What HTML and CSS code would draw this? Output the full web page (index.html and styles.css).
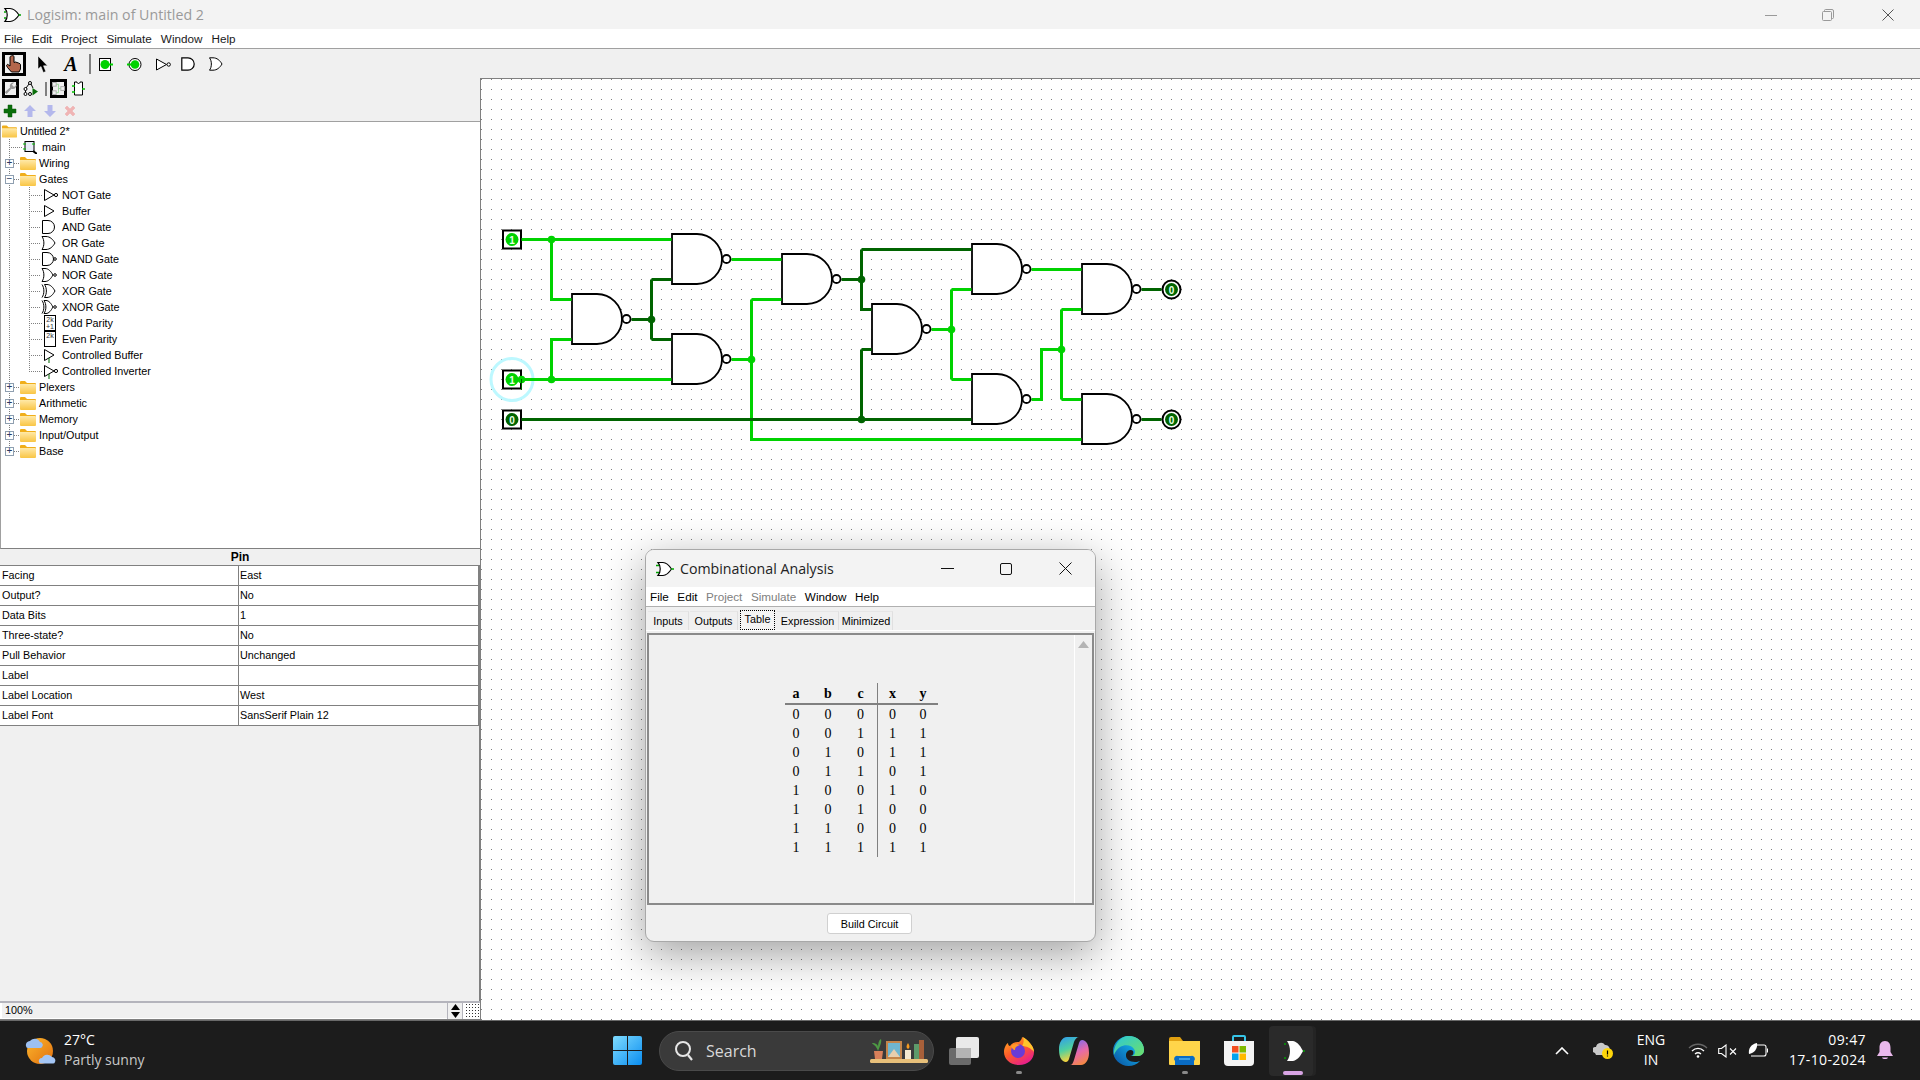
FILE: index.html
```html
<!DOCTYPE html>
<html lang="en">
<head>
<meta charset="utf-8">
<title>Logisim: main of Untitled 2</title>
<link rel="stylesheet" href="styles.css">
</head>
<body>
<svg class="defs" width="0" height="0" aria-hidden="true">
  <defs>
    <linearGradient id="fold" x1="0" y1="0" x2="0" y2="1"><stop offset="0" stop-color="#ffe9a8"/><stop offset="1" stop-color="#f9c544"/></linearGradient>
    <symbol id="folder" viewBox="0 0 16 14"><path d="M0 2a1 1 0 0 1 1-1h4l2 2h8a1 1 0 0 1 1 1v1H0z" fill="#f0ae1a"/><path d="M0 4h15a1 1 0 0 1 1 1v8a1 1 0 0 1-1 1H1a1 1 0 0 1-1-1z" fill="url(#fold)"/></symbol>
    <symbol id="i-not" viewBox="0 0 16 16"><path d="M1.5 2.5V13.5L11 8z" fill="#fff" stroke="#000"/><circle cx="13" cy="8" r="1.6" fill="#fff" stroke="#000"/></symbol>
    <symbol id="i-buf" viewBox="0 0 16 16"><path d="M1.5 2.5V13.5L11 8z" fill="#fff" stroke="#000"/></symbol>
    <symbol id="i-and" viewBox="0 0 16 16"><path d="M1.5 1.5H7A6.5 6.500 0 0 1 7 14.500H1.500z" fill="#fff" stroke="#000"/></symbol>
    <symbol id="i-or" viewBox="0 0 16 16"><path d="M1 1.500H5C9 1.500 12 4.500 14 8 12 11.500 9 14.500 5 14.500H1C3.500 11 3.500 5 1 1.500z" fill="#fff" stroke="#000"/></symbol>
    <symbol id="i-nand" viewBox="0 0 16 16"><path d="M1.500 1.500H6A6.500 6.500 0 0 1 6 14.500H1.500z" fill="#fff" stroke="#000"/><circle cx="14" cy="8" r="1.300" fill="#fff" stroke="#000"/></symbol>
    <symbol id="i-nor" viewBox="0 0 16 16"><path d="M1 1.500H4C7.500 1.500 10 4.500 12 8 10 11.500 7.500 14.500 4 14.500H1C3.500 11 3.500 5 1 1.500z" fill="#fff" stroke="#000"/><circle cx="14" cy="8" r="1.300" fill="#fff" stroke="#000"/></symbol>
    <symbol id="i-xor" viewBox="0 0 16 16"><path d="M3.500 1.500H6C9.500 1.500 12 4.500 14 8 12 11.500 9.500 14.500 6 14.500H3.500C6 11 6 5 3.500 1.500z" fill="#fff" stroke="#000"/><path d="M1 1.500C3.500 5 3.500 11 1 14.500" fill="none" stroke="#000"/></symbol>
    <symbol id="i-xnor" viewBox="0 0 16 16"><path d="M3 1.500H5C8 1.500 10 4.500 12 8 10 11.500 8 14.500 5 14.500H3C5.500 11 5.500 5 3 1.500z" fill="#fff" stroke="#000"/><path d="M1 1.500C3.500 5 3.500 11 1 14.500" fill="none" stroke="#000"/><circle cx="14" cy="8" r="1.300" fill="#fff" stroke="#000"/></symbol>
    <symbol id="i-cbuf" viewBox="0 0 16 16"><path d="M1.500 2.500V13.500L11 8z" fill="#fff" stroke="#000"/><path d="M6 11V16" stroke="#006400"/></symbol>
    <symbol id="i-cinv" viewBox="0 0 16 16"><path d="M1.500 2.500V13.500L11 8z" fill="#fff" stroke="#000"/><circle cx="13" cy="8" r="1.600" fill="#fff" stroke="#000"/><path d="M6 11V16" stroke="#006400"/></symbol>
    <g id="nand">
      <path d="M0-25H25A25 25 0 0 1 25 25H0Z" fill="#fff" stroke="#000" stroke-width="1.800"/>
      <circle cx="54.500" cy="0" r="4" fill="#fff" stroke="#000" stroke-width="1.800"/>
    </g>
  </defs>
</svg>

<div class="app">
  <header class="titlebar">
    <svg class="title-icon" width="18" height="16" viewBox="0 0 18 16"><path d="M2 1.500H7C10.500 1.500 14 5 16 8 14 11 10.500 14.500 7 14.500H2C5 11 5 5 2 1.500z" fill="#fff" stroke="#000" stroke-width="1.200"/><path d="M1 5H3M1 11H3" stroke="#00a000" stroke-width="1.500"/><path d="M15.500 8H18" stroke="#00a000" stroke-width="1.500"/></svg>
    <span class="title-text">Logisim: main of Untitled 2</span>
    <div class="win-controls">
      <svg width="12" height="12" viewBox="0 0 12 12"><path d="M0 6.500H12" stroke="#999"/></svg>
      <svg class="restore" width="12" height="12" viewBox="0 0 12 12"><path d="M2.500 2.500V1.500A1 1 0 0 1 3.500.5H10A1.500 1.500 0 0 1 11.500 2V8.500A1 1 0 0 1 10.500 9.500H9.500M1.500 2.500H8.500A1 1 0 0 1 9.500 3.500V10.500A1 1 0 0 1 8.500 11.500H1.500A1 1 0 0 1 .5 10.500V3.500A1 1 0 0 1 1.500 2.500Z" fill="none" stroke="#999"/></svg>
      <svg width="12" height="12" viewBox="0 0 12 12"><path d="M.5.500L11.500 11.500M11.500.500L.5 11.500" stroke="#555"/></svg>
    </div>
  </header>
  <nav class="menubar">
    <span>File</span><span>Edit</span><span>Project</span><span>Simulate</span><span>Window</span><span>Help</span>
  </nav>
  <div class="toolbar">
    <div class="tool-box">
      <svg width="18" height="18" viewBox="0 0 18 18"><path d="M7 .8C8 .3 9 .8 9 1.800V7.500L10.500 7 12 7.500 13.500 8 15 8.800 15.500 9.500V14L14 17H6.500L2.500 12.500 1.500 10.500 2.500 9.300 5 11V2C5 1.300 6 .9 7 .8Z" fill="#b4674c" stroke="#000"/></svg>
    </div>
    <svg width="11" height="17" viewBox="0 0 11 17"><path d="M1 0V13L4 10.500 6.300 16.500 8.800 15.500 6.500 9.800H10.500Z" fill="#000" stroke="#fff" stroke-width=".5"/></svg>
    <span class="tool-a">A</span>
    <span class="tool-sep"></span>
    <svg class="tool-pin" width="15" height="15" viewBox="0 0 15 15"><rect x=".5" y="1.500" width="11" height="12" fill="#fff" stroke="#000"/><circle cx="6" cy="7.500" r="4.500" fill="#00d200"/><path d="M10 7.500H14" stroke="#00d200" stroke-width="2"/></svg>
    <svg width="15" height="15" viewBox="0 0 15 15"><circle cx="8" cy="7.500" r="6" fill="#fff" stroke="#000"/><circle cx="8" cy="7.500" r="4.300" fill="#00d200"/><path d="M0 7.500H4" stroke="#00d200" stroke-width="2"/></svg>
    <svg width="15" height="13" viewBox="0 0 15 13"><path d="M.5 1V12L10.500 6.500Z" fill="#fff" stroke="#000"/><circle cx="12.700" cy="6.500" r="1.700" fill="#fff" stroke="#000"/></svg>
    <svg width="14" height="14" viewBox="0 0 14 14"><path d="M.8.800H7A6.200 6.200 0 0 1 7 13.200H.8Z" fill="#fff" stroke="#000" stroke-width="1.200"/></svg>
    <svg width="14" height="14" viewBox="0 0 14 14"><path d="M.5.800H4C8 .8 11 3.500 13 7 11 10.500 8 13.200 4 13.200H.5C3 10 3 4 .5.800Z" fill="#fff" stroke="#000"/></svg>
  </div>

  <div class="workspace">
    <aside class="sidebar">
      <div class="tools2">
        <div class="tool-box small">
          <svg width="13" height="13" viewBox="0 0 14 14"><path d="M13.500 3A4 4 0 0 1 8 7.200L2.800 13 .8 11 6.500 5.800A4 4 0 0 1 11 .5L8.500 3 10.800 5.300Z" fill="#999"/></svg>
        </div>
        <svg width="15" height="15" viewBox="0 0 15 15"><g fill="#fff" stroke="#000"><circle cx="7" cy="2" r="1.500"/><circle cx="2.500" cy="8" r="1.500"/><circle cx="2.500" cy="13" r="1.500"/><circle cx="7" cy="13" r="1.500"/></g><path d="M6 3L3 7M2.500 9.500V11.500M8 3L10 7" stroke="#000"/><path d="M9.500 7V14.500L15 10.500Z" fill="#0a6e0a"/></svg>
        <span class="tool-sep short"></span>
        <div class="tool-box small">
          <svg width="13" height="13" viewBox="0 0 14 14"><g fill="none" stroke="#aaa"><rect x=".5" y=".5" width="4" height="4"/><rect x=".5" y="9.500" width="4" height="4"/><rect x="9.500" y="5" width="4" height="4"/></g><path d="M4.500 2.500H7V11.500H4.500M7 7H9.500" fill="none" stroke="#9fd89f"/></svg>
        </div>
        <svg width="13" height="15" viewBox="0 0 13 15"><path d="M2.500 1H5C5 3 8 3 8 1H10.500V14H2.500Z" fill="#fff" stroke="#000"/><path d="M0 5H3M0 11H3M10 8H13" stroke="#00c000" stroke-width="1.400"/></svg>
      </div>
      <div class="tools3">
        <svg width="14" height="14" viewBox="0 0 14 14"><path d="M5 1H9V5H13V9H9V13H5V9H1V5H5Z" fill="#0a6e0a" stroke="#0a5a0a" stroke-width=".5"/></svg>
        <svg width="14" height="14" viewBox="0 0 14 14"><path d="M7 1L13 7H9.500V13H4.500V7H1Z" fill="#b4b8ec"/></svg>
        <svg width="14" height="14" viewBox="0 0 14 14"><path d="M7 13L13 7H9.500V1H4.500V7H1Z" fill="#b4b8ec"/></svg>
        <svg width="14" height="14" viewBox="0 0 14 14"><path d="M2 4L4 2 7 5 10 2 12 4 9 7 12 10 10 12 7 9 4 12 2 10 5 7Z" fill="#f0b4b4" stroke="#eaa" stroke-width=".5"/></svg>
      </div>

      <div class="tree">
        <div class="root-row"><svg class="fold-root" width="15" height="14"><use href="#folder"/></svg><span>Untitled 2*</span></div>
        <div class="lv1">
          <div class="row"><span class="stub w14"></span><svg width="14" height="14" viewBox="0 0 14 14"><rect x="2" y="1.500" width="9" height="10" fill="#e8ecf8" stroke="#000"/><path d="M0 4H3M0 9H3M9 4H12" stroke="#00c000"/><path d="M10 11L14 14" stroke="#000" stroke-width="2"/></svg><span class="lbl gap5">main</span></div>
          <div class="row"><span class="box">+</span><span class="stub w6"></span><svg width="16" height="14"><use href="#folder"/></svg><span class="lbl gap3">Wiring</span></div>
          <div class="row"><span class="box">−</span><span class="stub w6"></span><svg width="16" height="14"><use href="#folder"/></svg><span class="lbl gap3">Gates</span></div>
          <div class="lv2">
            <div class="row"><span class="stub w14"></span><svg width="16" height="16"><use href="#i-not"/></svg><span class="lbl gap3">NOT Gate</span></div>
            <div class="row"><span class="stub w14"></span><svg width="16" height="16"><use href="#i-buf"/></svg><span class="lbl gap3">Buffer</span></div>
            <div class="row"><span class="stub w12"></span><svg width="16" height="16"><use href="#i-and"/></svg><span class="lbl gap5">AND Gate</span></div>
            <div class="row"><span class="stub w12"></span><svg width="16" height="16"><use href="#i-or"/></svg><span class="lbl gap5">OR Gate</span></div>
            <div class="row"><span class="stub w12"></span><svg width="16" height="16"><use href="#i-nand"/></svg><span class="lbl gap5">NAND Gate</span></div>
            <div class="row"><span class="stub w12"></span><svg width="16" height="16"><use href="#i-nor"/></svg><span class="lbl gap5">NOR Gate</span></div>
            <div class="row"><span class="stub w12"></span><svg width="16" height="16"><use href="#i-xor"/></svg><span class="lbl gap5">XOR Gate</span></div>
            <div class="row"><span class="stub w12"></span><svg width="16" height="16"><use href="#i-xnor"/></svg><span class="lbl gap5">XNOR Gate</span></div>
            <div class="row"><span class="stub w14"></span><span class="parity"><i>2k</i><i>+1</i></span><span class="lbl gap3">Odd Parity</span></div>
            <div class="row"><span class="stub w14"></span><span class="parity"><i>2k</i></span><span class="lbl gap3">Even Parity</span></div>
            <div class="row"><span class="stub w14"></span><svg width="16" height="16"><use href="#i-cbuf"/></svg><span class="lbl gap3">Controlled Buffer</span></div>
            <div class="row"><span class="stub w14"></span><svg width="16" height="16"><use href="#i-cinv"/></svg><span class="lbl gap3">Controlled Inverter</span></div>
          </div>
          <div class="row"><span class="box">+</span><span class="stub w6"></span><svg width="16" height="14"><use href="#folder"/></svg><span class="lbl gap3">Plexers</span></div>
          <div class="row"><span class="box">+</span><span class="stub w6"></span><svg width="16" height="14"><use href="#folder"/></svg><span class="lbl gap3">Arithmetic</span></div>
          <div class="row"><span class="box">+</span><span class="stub w6"></span><svg width="16" height="14"><use href="#folder"/></svg><span class="lbl gap3">Memory</span></div>
          <div class="row"><span class="box">+</span><span class="stub w6"></span><svg width="16" height="14"><use href="#folder"/></svg><span class="lbl gap3">Input/Output</span></div>
          <div class="row"><span class="box">+</span><span class="stub w6"></span><svg width="16" height="14"><use href="#folder"/></svg><span class="lbl gap3">Base</span></div>
        </div>
      </div>

      <div class="attr-head">Pin</div>
      <div class="attrs">
        <div class="attr"><span>Facing</span><span>East</span></div>
        <div class="attr"><span>Output?</span><span>No</span></div>
        <div class="attr"><span>Data Bits</span><span>1</span></div>
        <div class="attr"><span>Three-state?</span><span>No</span></div>
        <div class="attr"><span>Pull Behavior</span><span>Unchanged</span></div>
        <div class="attr"><span>Label</span><span></span></div>
        <div class="attr"><span>Label Location</span><span>West</span></div>
        <div class="attr"><span>Label Font</span><span>SansSerif Plain 12</span></div>
      </div>
      <div class="attr-fill"></div>
      <div class="zoombar">
        <span class="zoom-val">100%</span>
        <span class="spin"><svg width="13" height="6" viewBox="0 0 13 6"><path d="M6.500 0L11 6H2Z"/></svg><svg width="13" height="6" viewBox="0 0 13 6"><path d="M2 0H11L6.500 6Z"/></svg></span>
        <span class="griddots"></span>
      </div>
    </aside>

    <main class="canvas">
      <svg class="circuit" viewBox="481 79 1439 941" width="1439" height="941">
        <defs>
          <pattern id="dots" x="481" y="79" width="10" height="10" patternUnits="userSpaceOnUse"><rect width="1" height="1" fill="#808080"/></pattern>
        </defs>
        <rect x="481" y="79" width="1439" height="941" fill="url(#dots)"/>
        <circle cx="512" cy="379.500" r="21" fill="none" stroke="#bdf8ff" stroke-width="3"/>
        <g transform="translate(1 0)">
          <use href="#nand" x="571" y="319"/><use href="#nand" x="671" y="259"/><use href="#nand" x="671" y="359"/>
          <use href="#nand" x="781" y="279"/><use href="#nand" x="871" y="329"/><use href="#nand" x="971" y="269"/>
          <use href="#nand" x="971" y="399"/><use href="#nand" x="1081" y="289"/><use href="#nand" x="1081" y="419"/>
        </g>
        <g class="pin">
          <rect x="503" y="230.500" width="18" height="18" fill="#fff" stroke="#000" stroke-width="2"/>
          <circle cx="512" cy="239.500" r="6.500" fill="#00d200"/><text x="512" y="243.500">1</text>
          <rect x="503" y="370.500" width="18" height="18" fill="#fff" stroke="#000" stroke-width="2"/>
          <circle cx="512" cy="379.500" r="6.500" fill="#00d200"/><text x="512" y="383.500">1</text>
          <rect x="503" y="410.500" width="18" height="18" fill="#fff" stroke="#000" stroke-width="2"/>
          <circle cx="512" cy="419.500" r="6.500" fill="#006400"/><text x="512" y="423.500">0</text>
          <circle cx="1171.500" cy="289.500" r="9" fill="#fff" stroke="#000" stroke-width="2"/>
          <circle cx="1171.500" cy="289.500" r="6.500" fill="#006400"/><text x="1171.500" y="293.500">0</text>
          <circle cx="1171.500" cy="419.500" r="9" fill="#fff" stroke="#000" stroke-width="2"/>
          <circle cx="1171.500" cy="419.500" r="6.500" fill="#006400"/><text x="1171.500" y="423.500">0</text>
        </g>
        <g transform="translate(.5 .5)" fill="none" stroke-width="3">
          <path stroke="#00d200" d="M521 239H671M551 239V299H571M521 379H671M551 379V339H571M731 259H781M731 359H751M751 299V439H1081M751 299H781M1031 269H1081M931 329H951M951 289V379M951 289H971M951 379H971M1031 399H1041V349H1061M1061 309V399M1061 309H1081M1061 399H1081"/>
          <path stroke="#006400" d="M631 319H651M651 279V339M651 279H671M651 339H671M841 279H861M861 249V309H871M861 249H971M521 419H971M861 349H871M861 349V419M1141 289H1161M1141 419H1161"/>
          <g fill="#00d200" stroke="none"><circle cx="551" cy="239" r="3.800"/><circle cx="551" cy="379" r="3.800"/><circle cx="751" cy="359" r="3.800"/><circle cx="1061" cy="349" r="3.800"/><circle cx="951" cy="329" r="3.800"/><circle cx="521" cy="379" r="3.800"/></g>
          <g fill="#006400" stroke="none"><circle cx="651" cy="319" r="3.800"/><circle cx="861" cy="279" r="3.800"/><circle cx="861" cy="419" r="3.800"/></g>
        </g>
        <path d="M521.500 379V390" stroke="#006400" stroke-width="1"/>
      </svg>

      <section class="dialog">
        <div class="dlg-title">
          <svg width="19" height="16" viewBox="0 0 19 16"><path d="M3 1.500H8C11 1.500 14.500 5 16.500 8 14.500 11 11 14.500 8 14.500H3C6 11 6 5 3 1.500z" fill="#fff" stroke="#000" stroke-width="1.200"/><path d="M1 4.500H4M1 11.500H4" stroke="#00a000" stroke-width="1.500"/><path d="M16 8H19" stroke="#00a000" stroke-width="1.500"/></svg>
          <span class="dlg-name">Combinational Analysis</span>
          <div class="dlg-controls">
            <svg width="13" height="13" viewBox="0 0 13 13"><path d="M0 6.500H13" stroke="#111"/></svg>
            <svg width="12" height="12" viewBox="0 0 12 12"><rect x=".5" y=".5" width="11" height="11" rx="1.500" fill="none" stroke="#111"/></svg>
            <svg width="13" height="13" viewBox="0 0 13 13"><path d="M.5.500L12.500 12.500M12.500.500L.5 12.500" stroke="#111"/></svg>
          </div>
        </div>
        <div class="dlg-menu"><span>File</span><span>Edit</span><span class="off">Project</span><span class="off">Simulate</span><span>Window</span><span>Help</span></div>
        <div class="tabs">
          <span class="tab t-in">Inputs</span><span class="tab t-out">Outputs</span><span class="tab t-tab active">Table</span><span class="tab t-exp">Expression</span><span class="tab t-min">Minimized</span>
        </div>
        <div class="panel">
          <div class="table-area">
            <div class="truth">
              <b>a</b><b>b</b><b>c</b><b>x</b><b>y</b>
              <span>0</span><span>0</span><span>0</span><span>0</span><span>0</span>
              <span>0</span><span>0</span><span>1</span><span>1</span><span>1</span>
              <span>0</span><span>1</span><span>0</span><span>1</span><span>1</span>
              <span>0</span><span>1</span><span>1</span><span>0</span><span>1</span>
              <span>1</span><span>0</span><span>0</span><span>1</span><span>0</span>
              <span>1</span><span>0</span><span>1</span><span>0</span><span>0</span>
              <span>1</span><span>1</span><span>0</span><span>0</span><span>0</span>
              <span>1</span><span>1</span><span>1</span><span>1</span><span>1</span>
            </div>
          </div>
          <div class="dlg-scroll"><svg width="11" height="7" viewBox="0 0 11 7"><path d="M5.500 0L11 7H0Z" fill="#b4b4b4"/></svg></div>
        </div>
        <div class="dlg-foot"><button class="build" type="button">Build Circuit</button></div>
      </section>
    </main>
  </div>

  <footer class="taskbar">
    <div class="weather">
      <svg width="32" height="30" viewBox="0 0 32 30">
        <defs><linearGradient id="sun" x1="0" y1="0" x2="1" y2="1"><stop offset="0" stop-color="#fbb62c"/><stop offset="1" stop-color="#e2700f"/></linearGradient></defs>
        <circle cx="16" cy="15" r="13" fill="url(#sun)"/>
        <path d="M2 10a4 4 0 0 1 4-5 6 6 0 0 1 10 1 3 3 0 0 1 2 5 2 2 0 0 1-2 1H4a2 2 0 0 1-2-2z" fill="#9cc0f2"/>
        <path d="M15 26a3 3 0 0 1 3-4 6 6 0 0 1 10-1 3.500 3.500 0 0 1 3 5 2 2 0 0 1-2 1.500H17a2 2 0 0 1-2-1.500z" fill="#a4c6f5"/>
      </svg>
      <div class="weather-text"><span class="temp">27°C</span><span class="cond">Partly sunny</span></div>
    </div>

    <div class="center">
      <svg class="tb-start" width="29" height="29" viewBox="0 0 29 29">
        <defs><linearGradient id="win" x1="0" y1="0" x2="1" y2="1"><stop offset="0" stop-color="#7fdcff"/><stop offset="1" stop-color="#0a8df0"/></linearGradient></defs>
        <path d="M2 0H14V14H0V2A2 2 0 0 1 2 0ZM15 0H27A2 2 0 0 1 29 2V14H15ZM0 15H14V29H2A2 2 0 0 1 0 27ZM15 15H29V27A2 2 0 0 1 27 29H15Z" fill="url(#win)"/>
      </svg>
      <div class="search">
        <svg width="20" height="22" viewBox="0 0 20 22"><circle cx="9" cy="9" r="7" fill="none" stroke="#e6e6e6" stroke-width="2"/><path d="M14 15L18 20" stroke="#e6e6e6" stroke-width="2.200"/></svg>
        <span class="search-txt">Search</span>
        <svg class="deco" width="58" height="28" viewBox="0 0 58 28">
          <rect x="0" y="22" width="58" height="4" rx="1.500" fill="#e8c07a"/>
          <path d="M4 14H13L12 22H5Z" fill="#d8805a"/><path d="M8 14C6 8 3 8 2 6 6 6 8 8 8 10 8 6 9 3 11 2 12 5 10 9 8 14Z" fill="#4d9a44"/>
          <rect x="16" y="4" width="16" height="18" fill="#c4854a"/><rect x="18" y="6" width="12" height="14" fill="#6fb6cf"/><path d="M18 20L24 12 30 20Z" fill="#e8cfae"/>
          <rect x="35" y="13" width="6" height="9" fill="#f4e9cf"/><path d="M38 6C40 9 40 11 38 12 36 11 36 9 38 6Z" fill="#f59a20"/>
          <rect x="44" y="7" width="5" height="15" fill="#5d9a6a"/><rect x="49" y="3" width="5" height="19" fill="#a8603a"/>
        </svg>
      </div>
      <svg class="tb-task" width="30" height="28" viewBox="0 0 30 28"><rect x="0" y="11" width="22" height="17" rx="2" fill="#6a6a6a"/><rect x="7" y="0" width="23" height="21" rx="2" fill="#e9e9e9"/><rect x="7" y="11" width="15" height="10" fill="#b4b4b4"/></svg>
      <span class="tb-app tb-fox dot">
        <svg width="30" height="28" viewBox="0 0 30 28">
          <defs><linearGradient id="ff" x1="0" y1="0" x2=".6" y2="1"><stop offset="0" stop-color="#ffb320"/><stop offset=".55" stop-color="#ff5a2a"/><stop offset="1" stop-color="#e8208a"/></linearGradient></defs>
          <path d="M15 28C6 28 0 22 0 15 0 11 2 7 4 6 4 8 5 9 6 9 8 6 11 5 15 5 17 3 18 2 18 0 24 3 30 9 30 15 30 22 24 28 15 28Z" fill="url(#ff)"/><path d="M19 0C24 3 30 9 30 15 27 11 22 9 18 9 20 6 20 3 19 0Z" fill="#ffc52c"/><circle cx="14" cy="14" r="7" fill="#6a3bd6"/><path d="M7 9C9 7 13 6 16 8 13 9 11 10 11 13 9 13 8 11 7 9Z" fill="#ff9a28"/>
        </svg>
      </span>
      <span class="tb-app tb-cop">
        <svg width="30" height="30" viewBox="0 0 30 30">
          <defs>
            <linearGradient id="cp1" x1="0" y1="0" x2=".3" y2="1"><stop offset="0" stop-color="#2f9bf0"/><stop offset=".55" stop-color="#4fd0a0"/><stop offset="1" stop-color="#f7d33c"/></linearGradient>
            <linearGradient id="cp2" x1=".3" y1="0" x2=".7" y2="1"><stop offset="0" stop-color="#7b6cf0"/><stop offset=".5" stop-color="#e86aa8"/><stop offset="1" stop-color="#f58a3c"/></linearGradient>
          </defs>
          <path d="M8 1H20C18 1 16 3 15 6L10 23C9 26 7 27 4 25 1 23 0 18 0 13 0 7 3 1 8 1Z" fill="url(#cp1)"/>
          <path d="M22 29H11C13 29 14 27 15 24L20 7C21 4 23 3 26 5 29 7 30 12 30 17 30 23 27 29 22 29Z" fill="url(#cp2)"/>
        </svg>
      </span>
      <span class="tb-app tb-edge">
        <svg width="31" height="30" viewBox="0 0 31 30">
          <defs>
            <linearGradient id="edge" x1="0" y1="1" x2="1" y2="0"><stop offset="0" stop-color="#0a4fa0"/><stop offset=".6" stop-color="#11a0dc"/><stop offset="1" stop-color="#38c6c8"/></linearGradient>
            <linearGradient id="edge2" x1="0" y1="0" x2="1" y2="1"><stop offset="0" stop-color="#2ac8d8"/><stop offset="1" stop-color="#6fe068"/></linearGradient>
          </defs>
          <path d="M15.500 0C24 0 31 6 31 14 31 18 28 20 24 20H13C13 23 17 26 22 26 24 26 26 25.500 27 25 24 28.500 20 30 15.500 30 7 30 0 23 0 15 0 7 7 0 15.500 0Z" fill="url(#edge)"/>
          <path d="M15.500 0C24 0 31 6 31 14 31 18 28 20 24 20H19C22 19 23 16 21 13 19 9 12 8 7 11 4 13 2 16 1 19 0 10 7 0 15.500 0Z" fill="url(#edge2)"/>
          <path d="M13 18C14 14 18 13 20 15 21 17 20 20 17 20H13Z" fill="#1c1c1c"/>
        </svg>
      </span>
      <span class="tb-app tb-files dot">
        <svg width="31" height="28" viewBox="0 0 31 28"><path d="M0 2A2 2 0 0 1 2 0H11L14 4H0Z" fill="#e0a010"/><path d="M0 4H31V27A1 1 0 0 1 30 28H1A1 1 0 0 1 0 27Z" fill="#ffd54a"/><path d="M6 24A3 3 0 0 1 9 19H22A3 3 0 0 1 25 24V28H6Z" fill="#0a6cc4"/><path d="M10 22H21" stroke="#4fb0f0" stroke-width="1.500"/></svg>
      </span>
      <span class="tb-app">
        <svg width="30" height="31" viewBox="0 0 30 31"><path d="M9 6V2A1 1 0 0 1 10 1H20A1 1 0 0 1 21 2V6" fill="none" stroke="#36c5e8" stroke-width="2"/><path d="M0 6H30V27A4 4 0 0 1 26 31H4A4 4 0 0 1 0 27Z" fill="#f4f4f4"/><rect x="8" y="11" width="6.500" height="6.500" fill="#f25022"/><rect x="15.500" y="11" width="6.500" height="6.500" fill="#7fba00"/><rect x="8" y="18.500" width="6.500" height="6.500" fill="#00a4ef"/><rect x="15.500" y="18.500" width="6.500" height="6.500" fill="#ffb900"/></svg>
      </span>
      <span class="tb-current">
        <svg width="22" height="24" viewBox="0 0 22 24"><path d="M4 2H10C15 3 18 8 20 12 18 16 15 21 10 22H4C8 16 8 8 4 2Z" fill="#fff"/><path d="M2 4V6M2 18V20" stroke="#00a000" stroke-width="1.500"/><path d="M20 12H22" stroke="#00a000" stroke-width="1.500"/></svg>
        <i class="running"></i>
      </span>
    </div>

    <div class="tray">
      <svg class="tr-chev" width="14" height="8" viewBox="0 0 14 8"><path d="M1 7L7 1 13 7" fill="none" stroke="#fff" stroke-width="1.600"/></svg>
      <svg class="tr-cloud" width="20" height="17" viewBox="0 0 20 17"><path d="M2 11A3 3 0 0 1 3 5 5 5 0 0 1 12 3 4 4 0 0 1 16 9V13H3Z" fill="#c8c8c8"/><circle cx="14.500" cy="11.500" r="5.500" fill="#ffd60a"/><path d="M14.500 8.500V12.500M14.500 13.500V14.500" stroke="#000" stroke-width="1.200"/></svg>
      <div class="lang"><span>ENG</span><span>IN</span></div>
      <svg class="tr-wifi" width="20" height="15" viewBox="0 0 20 15"><path d="M1 5C6 0 14 0 19 5" fill="none" stroke="#666" stroke-width="1.300"/><path d="M4 8C7.500 4.500 12.500 4.500 16 8M7 11C8.800 9.500 11.200 9.500 13 11" fill="none" stroke="#fff" stroke-width="1.300"/><circle cx="10" cy="13.500" r="1.300" fill="#fff"/></svg>
      <svg class="tr-vol" width="19" height="14" viewBox="0 0 19 14"><path d="M.7 4.500H3.500L8 1V13L3.500 9.500H.7Z" fill="none" stroke="#fff" stroke-width="1.100"/><path d="M12 4.500L18 10.500M18 4.500L12 10.500" stroke="#fff" stroke-width="1.100"/></svg>
      <svg class="tr-bat" width="20" height="15" viewBox="0 0 20 15"><path d="M6 2H16A2 2 0 0 1 18 4V11A2 2 0 0 1 16 13H3" fill="none" stroke="#fff" stroke-width="1.100"/><path d="M19.500 5.500V9.500" stroke="#fff" stroke-width="1.100"/><path d="M1 11C0 6 3 1 9 0 10 6 6 10 1 11Z" fill="#fff"/></svg>
      <div class="clock"><span>09:47</span><span>17-10-2024</span></div>
      <svg class="tr-bell" width="16" height="19" viewBox="0 0 16 19"><path d="M8 0C12 0 13.500 3 13.500 7V11L16 15H0L2.500 11V7C2.500 3 4 0 8 0Z" fill="#eab8ec"/><path d="M5 16.500H11C10.500 18.500 5.500 18.500 5 16.500Z" fill="#eab8ec"/></svg>
    </div>
  </footer>
</div>
</body>
</html>
```

FILE: styles.css
```css
* { box-sizing: border-box; }
html, body { margin: 0; height: 100%; overflow: hidden; }
body { font-family: "Liberation Sans", Arial, sans-serif; font-size: 10.8px; color: #000; background: #fff; }
svg { display: block; flex: none; }
.defs { position: absolute; }
.app { display: flex; flex-direction: column; width: 1920px; height: 1080px; }

/* main window chrome */
.titlebar { height: 29px; background: #f3f3f3; display: flex; align-items: center; padding-left: 3px; }
.title-text { margin-left: 6px; font: 14.2px "Open Sans", sans-serif; color: #9a9a9a; }
.win-controls { margin-left: auto; display: flex; gap: 45px; padding-right: 26px; }
.restore { margin-right: 3px; }
.menubar { height: 20px; background: #fff; border-bottom: 1px solid #a0a0a0; display: flex; align-items: center; gap: 9px; padding-left: 4px; font-size: 11.7px; color: #1a1a1a; }
.toolbar { height: 29px; background: #f0f0f0; display: grid; grid-template-columns: 24px 32px 26px 12px 21px 35px 22px 28px 28px; justify-items: center; align-items: center; padding-left: 2px; padding-top: 3px; align-content: start; }
.tool-box { width: 24px; height: 24px; border: 3px solid #000; display: flex; align-items: center; justify-content: center; }
.tool-box.small { width: 17px; height: 19px; }
.tool-a { font: italic bold 20px/24px "Liberation Serif", serif; }
.tool-sep { width: 2px; height: 20px; background: #808080; }
.tool-sep.short { height: 14px; }

.workspace { flex: 1; display: flex; min-height: 0; }
.sidebar { width: 481px; border-right: 1px solid #808080; background: #f0f0f0; display: flex; flex-direction: column; }
.tools2 { height: 22px; display: grid; grid-template-columns: 17px 22px 9px 17px 22px; justify-items: center; align-items: center; padding: 0 0 1px 2px; }
.tools3 { height: 22px; display: grid; grid-template-columns: repeat(4, 20px); justify-items: center; align-items: center; border-bottom: 1px solid #a0a0a0; }

/* project tree */
.tree { height: 427px; padding-top: 1px; background: #fff; border-bottom: 1px solid #808080; border-left: 1px solid #a0a0a0; }
.root-row { height: 16px; display: flex; align-items: center; padding-left: 1px; }
.root-row span { margin-left: 3px; }
.lv1 { margin-left: 8px; background: repeating-linear-gradient(180deg, #808080 0 1px, transparent 1px 2px) no-repeat 0 0 / 1px calc(100% - 8px); }
.lv2 { margin-left: 20px; background: repeating-linear-gradient(180deg, #808080 0 1px, transparent 1px 2px) no-repeat 0 0 / 1px calc(100% - 8px); }
.row { height: 16px; display: flex; align-items: center; }
.stub { height: 1px; flex: none; background: repeating-linear-gradient(90deg, #808080 0 1px, transparent 1px 2px); }
.w6 { width: 6px; }
.w12 { width: 12px; }
.w14 { width: 14px; }
.box { width: 9px; height: 9px; margin-left: -4px; flex: none; border: 1px solid #8f9fb0; background: #fff; display: flex; align-items: center; justify-content: center; font: 10px/1 "Liberation Sans", sans-serif; color: #2a3a60; }
.gap3 { margin-left: 3px; }
.gap5 { margin-left: 5px; }
.parity { width: 12px; height: 16px; margin-left: 1px; margin-right: 3px; flex: none; border: 1px solid #000; background: #fff; display: flex; flex-direction: column; align-items: center; font: 7px/7px "Liberation Sans", sans-serif; }
.parity i { font-style: normal; color: #333; }

/* attribute table */
.attr-head { height: 17px; background: #f0f0f0; border-bottom: 1px solid #808080; text-align: center; font: bold 12px/16px "Liberation Sans", sans-serif; }
.attrs { width: 480px; background: #fff; border-right: 2px solid #808080; }
.attr { height: 20px; display: grid; grid-template-columns: 239px 1fr; border-bottom: 1px solid #808080; background: #fff; }
.attr span { padding-left: 1px; line-height: 18px; white-space: nowrap; }
.attr span:first-child { padding-left: 2px; border-right: 1px solid #808080; }
.attr-fill { flex: 1; border-right: 1px solid #808080; }
.zoombar { height: 19px; background: #fff; border-top: 2px solid #b4b4bc; border-bottom: 1px solid #808080; display: flex; align-items: stretch; }
.zoom-val { width: 445px; padding-left: 3px; background: #f0f0f0; line-height: 15px; margin-left: 2px; border-bottom: 1px solid #fff; }
.spin { width: 16px; display: flex; flex-direction: column; justify-content: center; gap: 2px; padding-left: 1px; background: #f0f0f0; border-left: 1px solid #b4b4bc; border-right: 1px solid #b4b4bc; }
.griddots { width: 14px; margin-left: 2px; background: radial-gradient(#333 0 .7px, transparent .8px) 0 0 / 3px 3px; }

/* canvas */
.canvas { flex: 1; position: relative; background: #fff; border-top: 1px solid #808080; overflow: hidden; }
.circuit { width: 1439px; height: 941px; }
.pin text { font: bold 10px "Liberation Sans", sans-serif; fill: #e8ffe8; text-anchor: middle; }

/* analysis dialog */
.dialog { position: absolute; left: 164px; top: 470px; width: 451px; height: 393px; border: 1px solid #a8a8a8; border-radius: 9px; background: #f0f0f0; box-shadow: 0 12px 44px rgba(0,0,0,.38); display: flex; flex-direction: column; overflow: hidden; }
.dlg-title { height: 37px; background: #f3f3f3; display: flex; align-items: center; padding-left: 9px; flex: none; }
.dlg-name { margin-left: 6px; font: 14.2px "Open Sans", sans-serif; color: #222; }
.dlg-controls { margin-left: auto; display: flex; align-items: center; gap: 47px; padding-right: 23px; }
.dlg-controls svg:first-child { margin-right: -1px; }
.dlg-menu { height: 20px; flex: none; background: #fff; border-bottom: 1px solid #b0b0b0; display: flex; align-items: center; gap: 8.5px; padding-left: 4px; font-size: 11.7px; }
.dlg-menu .off { color: #808080; }
.tabs { height: 24px; flex: none; display: flex; align-items: flex-end; padding: 0 0 0 2px; gap: 1px; background: #f0f0f0; border-bottom: 1px solid #fff; }
.tab { height: 19px; line-height: 19px; text-align: center; font-size: 10.8px; border-top: 1px solid #e6e6e6; border-right: 1px solid #e0e0e0; }
.t-in { width: 41px; }
.t-out { width: 48px; }
.t-tab { width: 35px; margin-left: 1px; }
.t-exp { width: 62px; margin-left: 1px; }
.t-min { width: 53px; }
.tab.active { height: 20px; line-height: 16px; border: 1px dotted #000; background: #f4f4f4; }
.panel { height: 272px; flex: none; margin: 2px 1px 0 1px; border: 2px solid #8a8a8a; display: flex; background: #f0f0f0; }
.table-area { flex: 1; display: flex; align-items: center; justify-content: center; }
.truth { position: relative; display: grid; grid-template-columns: 27px 32px 33px 31px 30px; grid-template-rows: 21px repeat(8, 19px); font: 14px/19px "Liberation Serif", serif; text-align: center; }
.truth b { font-size: 14px; line-height: 21px; border-bottom: 2px solid #808080; height: 22px; }
.truth b:first-child, .truth span:nth-child(5n+1) { padding-right: 5px; }
.truth span { position: relative; top: 1px; }
.truth::after { content: ""; position: absolute; left: 92px; top: 0; bottom: -1px; width: 1px; background: #808080; }
.dlg-scroll { width: 18px; flex: none; border-left: 1px solid #fff; display: flex; justify-content: center; padding-top: 6px; }
.dlg-foot { flex: 1; display: flex; align-items: center; justify-content: center; padding: 1px 2px 0 0; }
.build { width: 85px; height: 21px; padding: 0; background: #fff; border: 1px solid #d0d0d0; border-radius: 3px; font: 10.8px "Liberation Sans", sans-serif; color: #000; }

/* taskbar */
.taskbar { height: 60px; flex: none; background: #1c1c1c; border-top: 1px solid #6a6a6a; display: flex; align-items: center; position: relative; color: #fff; font-family: "Open Sans", sans-serif; }
.weather { width: 613px; display: flex; align-items: center; padding-left: 24px; flex: none; }
.weather-text { margin: 0 0 2px 8px; display: flex; flex-direction: column; font-size: 14px; line-height: 20px; }
.cond { color: #c8c8c8; }
.center { display: flex; align-items: center; }
.search { width: 275px; height: 40px; margin-left: 17px; border-radius: 20px; background: #3a3a3a; border: 1px solid #4a4a4a; display: flex; align-items: center; padding-left: 14px; }
.search-txt { margin-left: 12px; font-size: 16px; color: #d8d8d8; }
.deco { margin-left: auto; margin-right: 5px; }
.tb-task { margin-left: 15px; }
.tb-app { position: relative; margin-left: 24px; }
.tb-fox, .tb-cop, .tb-files { margin-left: 25px; }
.tb-app.dot::after { content: ""; position: absolute; left: 50%; bottom: -9px; width: 6px; height: 3px; margin-left: -3px; border-radius: 2px; background: #8a8a8a; }
.tb-current { position: relative; margin-left: 15px; width: 44px; height: 50px; padding-left: 5px; border-radius: 4px; background: #2a2a2a; box-shadow: 3px 0 0 #242424; display: flex; align-items: center; justify-content: center; }
.running { position: absolute; left: 14px; bottom: 1px; width: 20px; height: 4px; border-radius: 2px; background: #d8a4e4; }
.tray { margin-left: auto; display: flex; align-items: center; padding-right: 27px; font-size: 14px; line-height: 20px; }
.tr-chev { margin-right: 1px; }
.tr-cloud { margin-left: 23px; }
.lang { width: 28px; margin: 0 0 1px 24px; display: flex; flex-direction: column; align-items: center; }
.tr-wifi { margin-left: 23px; }
.tr-vol { margin-left: 10px; }
.tr-bat { margin-left: 11px; }
.clock { width: 90px; margin: 0 0 2px 8px; display: flex; flex-direction: column; align-items: flex-end; letter-spacing: .4px; }
.tr-bell { margin-left: 11px; }
```
